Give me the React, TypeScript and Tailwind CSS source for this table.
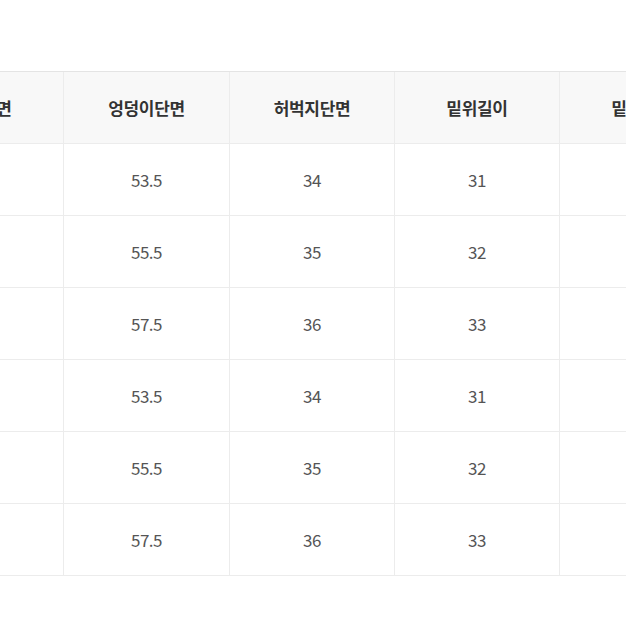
const headers = ['허리단면', '엉덩이단면', '허벅지단면', '밑위길이', '밑단단면'];

// outer columns are cut off by the frame, their values are not visible
const rows = [
  ['', '53.5', '34', '31', ''],
  ['', '55.5', '35', '32', ''],
  ['', '57.5', '36', '33', ''],
  ['', '53.5', '34', '31', ''],
  ['', '55.5', '35', '32', ''],
  ['', '57.5', '36', '33', ''],
];

const font = { fontFamily: '"Noto Sans CJK KR", "Noto Sans", sans-serif' };

export default function App() {
  return (
    <div className="w-[626px] h-[626px] bg-white overflow-hidden pt-[71px]" style={font}>
      <div className="ml-[-101px] w-[826px] grid grid-cols-[165px_166px_165px_165px_165px] border-t border-[#e4e4e4]">
        {headers.map((h) => (
          <div
            key={h}
            className="h-[72px] flex items-center justify-center bg-[#f8f8f8] border-r border-b border-[#ececec] text-[17px] font-bold tracking-[-0.3px] text-[#333]"
          >
            {h}
          </div>
        ))}
        {rows.map((r, i) =>
          r.map((v, j) => (
            <div
              key={`${i}-${j}`}
              className="h-[72px] flex items-center justify-center border-r border-b border-[#ececec] text-[17px] tracking-[-0.5px] text-[#555]"
            >
              {v}
            </div>
          ))
        )}
      </div>
    </div>
  );
}
